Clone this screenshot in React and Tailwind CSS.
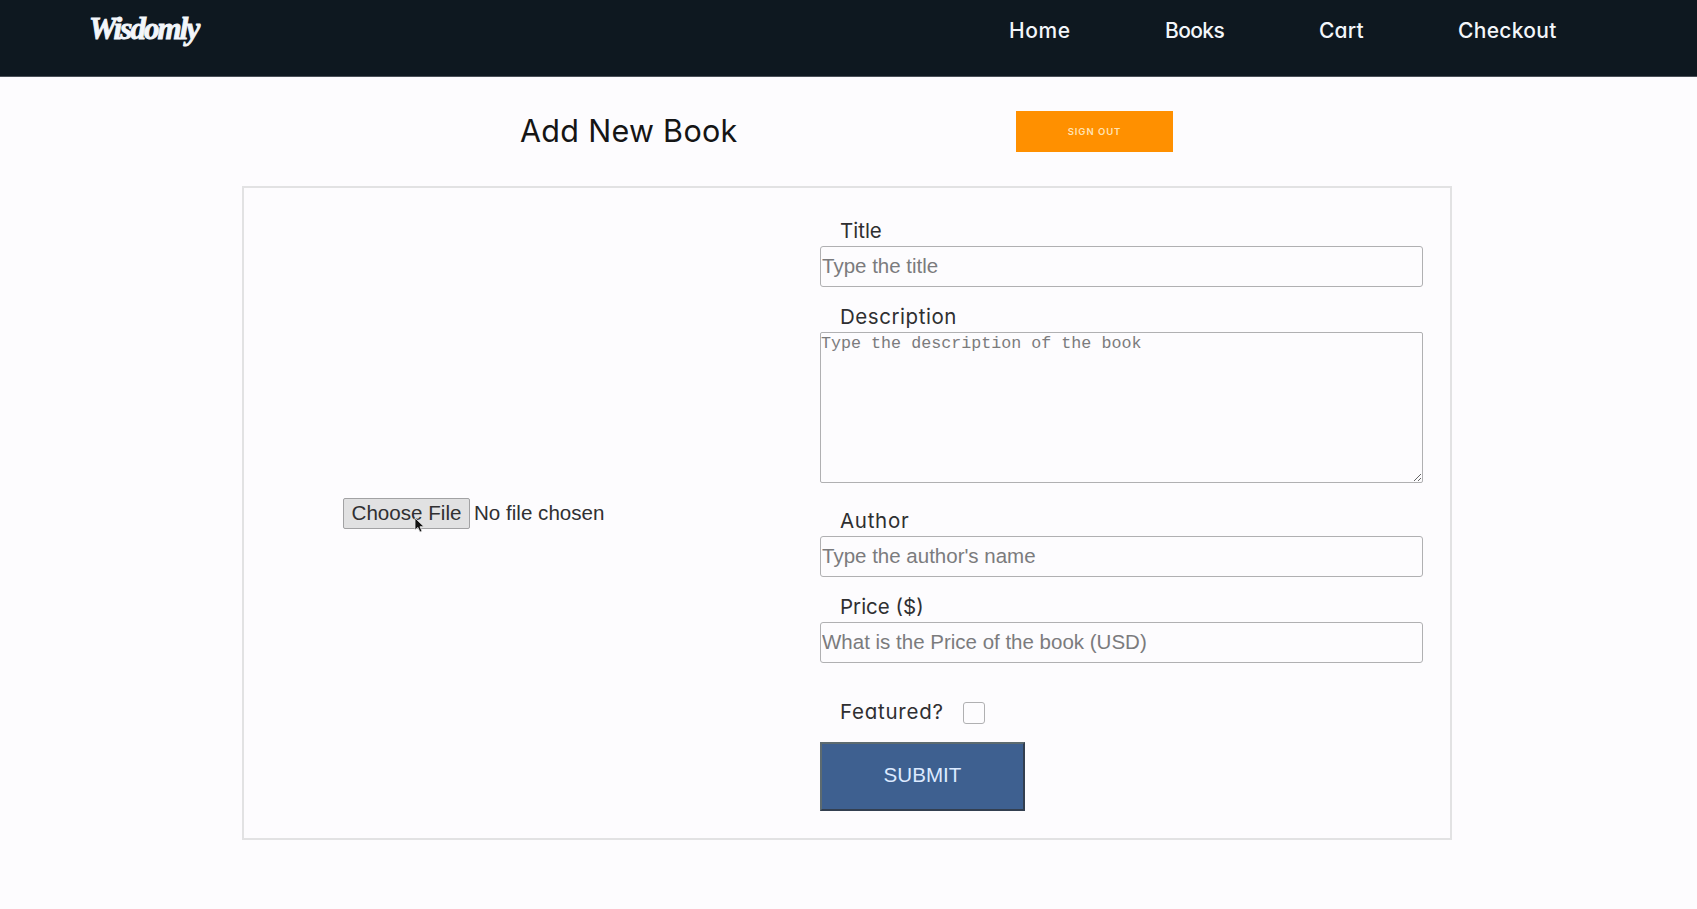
import React from "react";

const geo = "font-[Inter,sans-serif] [font-feature-settings:'cv11']";
const field =
  "block h-[41px] w-[603px] rounded-[3px] border-[1.5px] border-[#b0b0b2] bg-transparent pl-px pb-px font-['Liberation_Sans',sans-serif] text-[20.5px] text-[#333] placeholder:text-[#7b7b7d] placeholder:opacity-100 outline-none";

function Label({ children, className }) {
  return (
    <label className={`block pl-5 text-[20.5px] leading-[30px] text-[#2f2f31] ${className ?? ""}`}>
      {children}
    </label>
  );
}

function Header() {
  return (
    <header className="flex h-[77px] items-start justify-between border-b border-[#4a5058] bg-[#0e1820] pl-[89px] pr-[140px] text-[#f3f6fa]">
      <div className="mt-[9px] font-['Liberation_Serif',serif] text-[31px] leading-[40px] font-bold italic tracking-[-1.9px] [-webkit-text-stroke:0.9px_#f3f6fa]">
        Wisdomly
      </div>
      <nav className="mt-[16px] flex text-[21px] leading-[30px] font-medium">
        <a className="w-[156px] tracking-[0.6px]">Home</a>
        <a className="w-[154px] tracking-[-0.6px]">Books</a>
        <a className="w-[139px] tracking-[0.2px]">Cart</a>
        <a className="w-[99px] tracking-[0.3px]">Checkout</a>
      </nav>
    </header>
  );
}

function Cursor() {
  return (
    <svg className="absolute left-[71px] top-[19px]" width="11" height="17" viewBox="0 0 11 17">
      <path d="M1 1v12l2.9-2.6 2 4.7 2.1-.9-2-4.5H10z" fill="#111" stroke="#e8e8ea" strokeWidth="0.8" />
    </svg>
  );
}

export default function App() {
  return (
    <div className={`h-[909px] w-full overflow-hidden bg-[#fdfcfe] ${geo}`}>
      <Header />
      <div className="flex h-[109px] items-start">
        <h1 className="ml-[520px] mt-[32px] w-[496px] text-[30.5px] leading-[44px] text-[#151515] tracking-[0.3px]">
          Add New Book
        </h1>
        <button className="mt-[34px] h-[41px] w-[157px] bg-[#ff9000] pt-px text-[9.5px] font-semibold tracking-[0.95px] text-[#ffe3b5]">
          SIGN OUT
        </button>
      </div>
      <main className="ml-[242px] flex h-[654px] w-[1210px] border-2 border-[#e2e2e3]">
        <div className="flex w-[576px] items-start pl-[99px] pt-[310px] font-['Liberation_Sans',sans-serif] text-[20.6px] leading-[27px] text-[#303032]">
          <div className="relative flex h-[31px] items-start gap-[4px]">
            <button className="flex h-[31px] w-[127px] items-start justify-center whitespace-nowrap rounded-[2px] border-[1.5px] border-[#a2a2a4] bg-[#e1e1e2]">
              Choose File
            </button>
            <span className="pt-px">No file chosen</span>
            <Cursor />
          </div>
        </div>
        <form className="pt-[28px]">
          <Label>Title</Label>
          <input className={field} placeholder="Type the title" />
          <Label className="mt-[15px] tracking-[0.55px]">Description</Label>
          <textarea
            className="block h-[151px] w-[603px] rounded-[2px] border-[1.5px] border-[#b0b0b2] bg-transparent font-['Liberation_Mono',monospace] text-[16.7px] leading-[21px] placeholder:text-[#7b7b7d] placeholder:opacity-100 outline-none"
            placeholder="Type the description of the book"
          />
          <Label className="mt-[23px] tracking-[0.7px]">Author</Label>
          <input className={field} placeholder="Type the author's name" />
          <Label className="mt-[15px]">Price ($)</Label>
          <input className={field} placeholder="What is the Price of the book (USD)" />
          <div className="mt-[34px] flex h-[30px] items-center">
            <Label className="w-[143px] tracking-[0.75px]">Featured?</Label>
            <input
              type="checkbox"
              className="mt-[2px] size-[22px] appearance-none rounded-[3px] border-[1.5px] border-[#b0b0b2] bg-transparent"
            />
          </div>
          <button
            type="button"
            className="mt-[15px] block h-[69px] w-[205px] border-2 border-t-[#5d6b70] border-l-[#5d6b70] border-r-[#333f50] border-b-[#333f50] bg-[#3e6090] pb-[2px] font-['Liberation_Sans',sans-serif] text-[20.6px] text-[#dceaff]"
          >
            SUBMIT
          </button>
        </form>
      </main>
    </div>
  );
}
